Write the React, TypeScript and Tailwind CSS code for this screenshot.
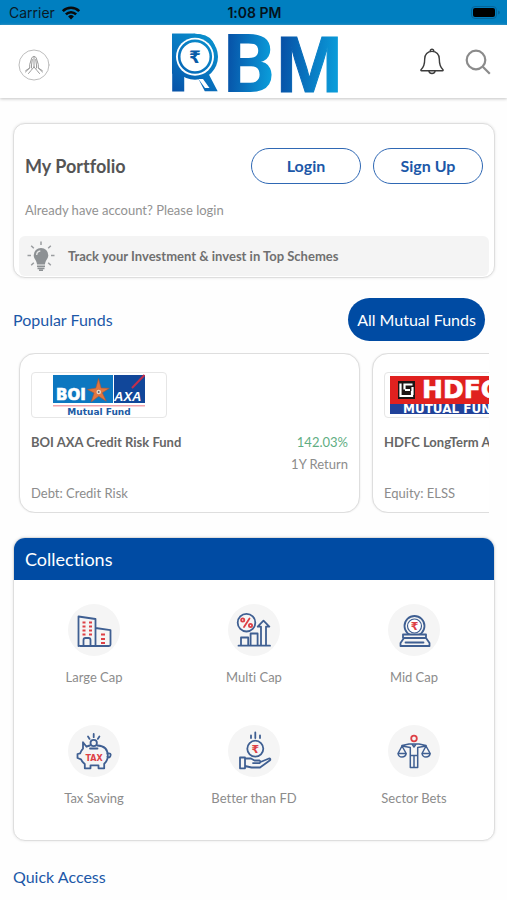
import type { ReactNode } from "react";

const NAVY = "#3f5f92";
const RED = "#dd4046";

function WifiIcon() {
  return (
    <svg viewBox="0 0 20 14" className="h-[14px] w-5" fill="none" stroke="#0a0a0a" strokeWidth="2.6" aria-hidden="true">
      <path d="M1.8 5.2a11.6 11.6 0 0 1 16.4 0" />
      <path d="M4.9 8.4a7.2 7.2 0 0 1 10.2 0" />
      <path d="M10 13.4 7.1 10.5a4.1 4.1 0 0 1 5.8 0Z" fill="#0a0a0a" stroke="none" />
    </svg>
  );
}

function BatteryIcon() {
  return (
    <svg viewBox="0 0 29 13" className="h-[13px] w-[29px]" aria-hidden="true">
      <rect x="0.5" y="0.5" width="25" height="12" rx="3.5" fill="none" stroke="#04659b" />
      <rect x="2" y="2" width="22" height="9" rx="2" fill="#000" />
      <path d="M27 4.5q2 .6 2 2t-2 2Z" fill="#04659b" />
    </svg>
  );
}

function PrayingHands() {
  return (
    <svg viewBox="0 0 32 32" className="size-8" fill="none" stroke="#9a9a9a" strokeLinecap="round" strokeLinejoin="round" aria-hidden="true">
      <circle cx="16" cy="16" r="15" stroke="#bdbdbd" />
      <path d="M16 7.5v10.5M16 7.5c-1.6 0-2.2 1-2.6 2.6l-1.7 5.4v3.500l-4 2.600M16 7.500c1.600 0 2.200 1 2.600 2.600l1.700 5.400v3.500l4 2.600" />
      <path d="M14.300 10.500l-.8 5.500v3M17.700 10.500l.8 5.500v3M16 18l-3 3.500-2.500 3M16 18l3 3.500 2.500 3M11.700 19l-4.200 4M20.300 19l4.200 4" />
    </svg>
  );
}

function BrandLogo() {
  return (
    <svg viewBox="0 0 168 62" className="mt-[2px] h-[62px] w-[168px] overflow-visible" role="img" aria-label="RBM">
      <defs>
        <linearGradient id="gradR" x1="0" y1="60" x2="47" y2="0" gradientUnits="userSpaceOnUse">
          <stop offset="0" stopColor="#0750a6" />
          <stop offset="0.45" stopColor="#0873be" />
          <stop offset="1" stopColor="#0a97d0" />
        </linearGradient>
        <linearGradient id="gradL" x1="0" y1="0" x2="1" y2="0.1">
          <stop offset="0.1" stopColor="#0750a6" />
          <stop offset="0.5" stopColor="#0873be" />
          <stop offset="0.95" stopColor="#0a9bd9" />
        </linearGradient>
      </defs>
      <text x="-4" y="60" fontFamily="Roboto, sans-serif" fontWeight="700" fontSize="82" fill="url(#gradR)">R</text>
      <rect x="1" y="1.700" width="23" height="40" fill="url(#gradR)" />
      <circle cx="24" cy="24.700" r="23" fill="url(#gradR)" />
      <circle cx="24" cy="24.700" r="19" fill="#fff" />
      <circle cx="24" cy="24.700" r="15.800" fill="none" stroke="url(#gradR)" strokeWidth="2.600" />
      <path d="M27.500 47h4.500l6.500 9h-4.500Z" fill="#fff" />
      <text x="24" y="31" textAnchor="middle" fontFamily="'DejaVu Sans', sans-serif" fontWeight="700" fontSize="17" fill="#0a5ba8">₹</text>
      <text x="52" y="60" fontFamily="Roboto, sans-serif" fontWeight="700" fontSize="82" fill="url(#gradL)">B</text>
      <text x="105" y="60" fontFamily="'Liberation Sans', sans-serif" fontWeight="700" fontSize="80" fill="url(#gradL)" stroke="url(#gradL)" strokeWidth="1">M</text>
    </svg>
  );
}

function BellIcon() {
  return (
    <svg viewBox="0 0 26 28" className="h-7 w-[26px]" fill="none" stroke="#3c3c3c" strokeWidth="1.400" strokeLinejoin="round" aria-hidden="true">
      <path d="M11.200 3.600V3a1.800 1.800 0 0 1 3.600 0v.6M13 3.400c-4.500 0-7.300 3.300-7.300 7.600 0 5.800-.8 8-3.500 10.400-.7.700-.4 1.400.4 1.400h20.800c.8 0 1.100-.7.4-1.400-2.700-2.400-3.500-4.600-3.500-10.400 0-4.300-2.800-7.600-7.300-7.600Z" />
      <path d="M9.800 23a3.300 3.300 0 0 0 6.400 0" />
    </svg>
  );
}

function SearchIcon() {
  return (
    <svg viewBox="0 0 26 26" className="size-[26px]" fill="none" stroke="#8b8b8b" strokeWidth="2.200" aria-hidden="true">
      <circle cx="11" cy="11" r="9.300" />
      <path d="m17.800 17.800 7 7" />
    </svg>
  );
}

function BulbIcon() {
  return (
    <svg viewBox="0 0 30 32" className="h-8 w-[30px]" fill="none" stroke="#9a9da0" strokeWidth="1.500" aria-hidden="true">
      <path d="M15 1.500v3.500M1.500 15.500H5M25 15.500h3.500M5.200 5.700l2.600 2.600M24.800 5.700l-2.600 2.600M5.200 25.300l2.600-2.600M24.800 25.300l-2.600-2.600" />
      <path d="M15 8a7.200 7.200 0 0 0-7.300 7.200c0 3.700 3.300 5.300 3.300 9.300h8c0-4 3.300-5.600 3.300-9.300A7.200 7.200 0 0 0 15 8Z" fill="#8d9194" stroke="none" />
      <path d="M10.700 15c0-2.300 1.400-3.700 3.600-4" stroke="#e8e8e8" strokeWidth="1.300" />
      <path d="M11 26.300h8M11.500 28.400h7M13 30.300h4" stroke="#8d9194" strokeWidth="1.600" />
    </svg>
  );
}

function BoiAxaLogo() {
  return (
    <svg viewBox="0 0 92 42" className="h-[42px] w-[92px]" role="img" aria-label="BOI AXA Mutual Fund">
      <rect x="0" y="1" width="60" height="28" fill="#0d77c0" />
      <rect x="61" y="1" width="31" height="28" fill="#11479a" />
      <text x="3" y="26" fontFamily="'DejaVu Sans', sans-serif" fontWeight="700" fontSize="15" fill="#fff" stroke="#fff" strokeWidth="0.700">BOI</text>
      <path d="M45.500 4.500l2.600 9.500 8.200.3-7 4.500 4 8.400-7.600-5-7.600 5.800 3-9-6.600-3.500 8.300-1.400Z" fill="#e27640" stroke="#a95836" strokeWidth="0.600" />
      <circle cx="45.700" cy="18" r="2.300" fill="#e8d8c8" />
      <circle cx="45.700" cy="18" r="0.900" fill="#5a5f70" />
      <path d="M79 14 91.500 1" stroke="#c32f4c" strokeWidth="2" />
      <text x="61" y="27" fontFamily="'Liberation Sans', sans-serif" fontStyle="italic" fontWeight="700" fontSize="13" fill="#fff">AXA</text>
      <rect x="0" y="31" width="92" height="1.500" fill="#f3a5ad" />
      <text x="46" y="41" textAnchor="middle" fontFamily="'DejaVu Sans', sans-serif" fontWeight="700" fontSize="9" fill="#205aa4">Mutual Fund</text>
    </svg>
  );
}

function HdfcLogo() {
  return (
    <svg viewBox="0 0 124 38" className="h-[38px] w-[124px]" role="img" aria-label="HDFC Mutual Fund">
      <rect width="124" height="28" fill="#e0211f" />
      <rect y="28" width="124" height="10" fill="#21429a" />
      <rect x="8" y="5" width="17" height="18" fill="#1c1414" />
      <path d="M10.500 7.500v12.500h5M12.500 20h9.500v-5M22.500 8.500h-8v5M15 14h5M22.500 11v8" fill="none" stroke="#fff" strokeWidth="2.200" />
      <text x="32" y="22" fontFamily="'DejaVu Sans', sans-serif" fontWeight="700" fontSize="25" fill="#fff" stroke="#fff" strokeWidth="0.600">HDFC</text>
      <text x="13" y="37" fontFamily="'DejaVu Sans', sans-serif" fontWeight="700" fontSize="12" fill="#fff">MUTUAL FUND</text>
    </svg>
  );
}

function IconDisc({ children }: { children: ReactNode }) {
  return (
    <svg viewBox="0 0 52 52" className="size-[52px]" fill="none" stroke={NAVY} strokeWidth="1.800" strokeLinecap="round" strokeLinejoin="round" aria-hidden="true">
      <circle cx="26" cy="26" r="26" fill="#f5f5f5" stroke="none" />
      {children}
    </svg>
  );
}

function Rupee({ x, y, size }: { x: number; y: number; size: number }) {
  return (
    <text x={x} y={y} textAnchor="middle" fontFamily="'DejaVu Sans', sans-serif" fontWeight="700" fontSize={size} fill={RED} stroke="none">₹</text>
  );
}

const largeCap = (
  <IconDisc>
    <path d="M10.500 42V12.500l17 2.500v27M27.500 24l15 2.200V40.500q0 1.500-1.500 1.500H12q-1.500 0-1.500-1.500" />
    <path d="M15.500 42v-6q0-2 2-2h3q2 0 2 2v6" />
    <path d="M14.500 18.500h3M21 18.500h3M14.500 22.500h3M21 22.500h3M14.500 26.500h3M21 26.500h3M14.500 30.500h3M21 30.500h3M33 30.500h4M33 35h4M33 39h4" stroke={RED} strokeWidth="1.800" strokeLinecap="butt" />
  </IconDisc>
);

const multiCap = (
  <IconDisc>
    <circle cx="18.500" cy="18.700" r="8.800" />
    <path d="M21.500 14.500l-5.500 8.500" stroke={RED} />
    <circle cx="14.700" cy="16" r="1.600" stroke={RED} />
    <circle cx="22.500" cy="21.500" r="1.600" stroke={RED} />
    <path d="M10.500 41.700H42M13 41.500v-8h7.200v8M22.600 41.500V29.500h7v12M33 41.500V22.700h-3.300l5.800-6 5.800 6H38v18" />
  </IconDisc>
);

const midCap = (
  <IconDisc>
    <circle cx="26.500" cy="22" r="10" />
    <circle cx="26.500" cy="22" r="7" fill="#fff" strokeWidth="1.200" />
    <Rupee x={26.500} y={26} size={11} />
    <path d="M15 30.500h23v3.500H15ZM16 34l-3.500 5v3h29v-3L38 34M17.500 38.500h18" fill="#f5f5f5" />
  </IconDisc>
);

const taxSaving = (
  <IconDisc>
    <path d="M22 20.500c-1.500.2-2.500.6-3.500 1.200l-3.500-4.500v6.500c-1.500 1.500-2.300 3-2.800 4.600L9.500 29v4l3.500 1.300c1 2.200 2.200 3.600 3.800 4.700v4.300h5.700v-3h8v3h5.700v-4.500c2.300-2 3.600-4.800 3.600-8 0-6.500-4-10-10.300-10.300" />
    <path d="M39.500 28.500q4-.8 3 2.200t-3 1M22 23.500h7.500" />
    <circle cx="25.700" cy="18" r="3.200" />
    <path d="M25.700 9v3.200M20 11.500l1.600 2.400M31.400 11.500l-1.600 2.400" />
    <text x="26" y="36" textAnchor="middle" fontFamily="'DejaVu Sans', sans-serif" fontWeight="700" fontSize="8" fill={RED} stroke="none">TAX</text>
  </IconDisc>
);

const betterThanFd = (
  <IconDisc>
    <circle cx="27.300" cy="23.700" r="8" />
    <Rupee x={27.300} y={27.700} size={11} />
    <path d="M27.300 7.500V13M23 10.500V13M32 10.500V13" />
    <path d="M12 32.500h5v10.800h-5ZM17 33.500h6l3.500 2h5q1.800 1.200 0 2.600H25M32.500 37l8.500-3.500q2 .2 1 1.800L32 42.500H23.500L17 41" />
  </IconDisc>
);

const sectorBets = (
  <IconDisc>
    <circle cx="26" cy="13.500" r="2.800" stroke={RED} />
    <path d="M14 20.500l7-1.500h10l7 1.500M22.300 42.500V22.500L14 21M29.700 42.500V22.500L38 21M22.300 42.500h7.400M26 31v11M22.300 30.500h7.400M24 19l2 3 2-3" strokeWidth="1.500" />
    <path d="M14 21l-4 7.500h8.200ZM38 21l-4 7.500h8.200ZM10 28.500q.5 3.500 4 3.500t4.200-3.500M34 28.500q.5 3.500 4 3.500t4.200-3.500" strokeWidth="1.500" />
  </IconDisc>
);

const collections = [
  { label: "Large Cap", icon: largeCap },
  { label: "Multi Cap", icon: multiCap },
  { label: "Mid Cap", icon: midCap },
  { label: "Tax Saving", icon: taxSaving },
  { label: "Better than FD", icon: betterThanFd },
  { label: "Sector Bets", icon: sectorBets },
];

interface FundCardProps {
  logo: ReactNode;
  name: string;
  category: string;
  value: string;
}

function FundCard({ logo, name, category, value }: FundCardProps) {
  return (
    <article className="w-[341px] shrink-0 rounded-2xl border border-[#dedede] bg-white px-[11px] pt-[18px] pb-2 text-[13px] leading-[22px] text-[#8c8c8c] shadow-[0_0_2px_#e4e4e4]">
      <div className="flex h-[46px] w-[136px] items-center justify-center rounded-sm border border-[#e6e6e6]">{logo}</div>
      <div className="mt-[13px] flex justify-between whitespace-nowrap">
        <h3 className="font-bold text-[#666]">{name}</h3>
        <span className="text-[#5fae83]">{value}</span>
      </div>
      <p className="text-right">1Y Return</p>
      <p className="mt-[7px]">{category}</p>
    </article>
  );
}

export default function App() {
  return (
    <div className="min-h-screen bg-[#fefefe] font-['Lato',sans-serif] [font-variant-ligatures:none]">
      <div className="grid h-[25px] grid-cols-3 items-center bg-[#007fc0] pr-[7px] pl-[9px] font-['Inter',sans-serif] text-sm text-[#0a1a26]">
        <span className="flex items-center gap-[6px]">
          Carrier
          <WifiIcon />
        </span>
        <span className="text-center font-semibold text-[#04121c]">1:08 PM</span>
        <span className="flex justify-end">
          <BatteryIcon />
        </span>
      </div>

      <header className="grid h-[73px] grid-cols-[1fr_auto_1fr] items-center bg-white pr-4 pl-[18px] shadow-[0_1px_3px_#c4c4c4]">
        <button type="button" aria-label="Welcome" className="mt-[6px] justify-self-start">
          <PrayingHands />
        </button>
        <BrandLogo />
        <div className="flex items-center gap-5 justify-self-end">
          <button type="button" aria-label="Notifications">
            <BellIcon />
          </button>
          <button type="button" aria-label="Search">
            <SearchIcon />
          </button>
        </div>
      </header>

      <main className="pt-[25px] pr-3 pb-[10px] pl-[13px]">
        <section className="rounded-xl border border-[#dedede] bg-white px-[5px] pt-6 shadow-[0_0_3px_#e4e4e4]">
          <div className="flex items-center justify-between px-[6px]">
            <h1 className="text-lg font-bold text-[#555]">My Portfolio</h1>
            <div className="flex gap-3">
              <button type="button" className="h-9 w-[110px] rounded-full border border-[#2f68b4] text-base font-bold text-[#1c58a8]">
                Login
              </button>
              <button type="button" className="h-9 w-[110px] rounded-full border border-[#2f68b4] text-base font-bold text-[#1c58a8]">
                Sign Up
              </button>
            </div>
          </div>
          <p className="mt-4 px-[6px] text-[13px] leading-5 text-[#929292]">Already have account? Please login</p>
          <div className="mt-4 mb-px flex h-10 items-center gap-3 rounded-md bg-[#f4f4f4] pl-[7px]">
            <BulbIcon />
            <p className="text-[13px] leading-5 font-bold text-[#707070]">Track your Investment &amp; invest in Top Schemes</p>
          </div>
        </section>

        <section className="mt-5">
          <div className="flex items-center justify-between pr-[10px]">
            <h2 className="text-base text-[#1c58a8]">Popular Funds</h2>
            <button type="button" className="h-[43px] w-[137px] rounded-full bg-[#004ba3] text-base text-white">
              All Mutual Funds
            </button>
          </div>
          <div className="mt-3 mr-[6px] flex gap-3 overflow-x-auto pl-[6px] [scrollbar-width:none]">
            <FundCard logo={<BoiAxaLogo />} name="BOI AXA Credit Risk Fund" category="Debt: Credit Risk" value="142.03%" />
            <FundCard logo={<HdfcLogo />} name="HDFC LongTerm Advantage Fund" category="Equity: ELSS" value="68.34%" />
          </div>
        </section>

        <section className="mt-6 overflow-hidden rounded-xl border border-[#dedede] bg-white shadow-[0_0_3px_#e4e4e4]">
          <h2 className="bg-[#004ba3] px-[11px] py-[7px] text-lg text-white">Collections</h2>
          <ul className="grid grid-cols-3 gap-y-[38px] pt-6 pb-8">
            {collections.map((item) => (
              <li key={item.label}>
                <a href="#" className="flex flex-col items-center gap-[11px] text-[13px] leading-5 text-[#8c8c8c]">
                  {item.icon}
                  {item.label}
                </a>
              </li>
            ))}
          </ul>
        </section>

        <h2 className="mt-6 text-base text-[#1c58a8]">Quick Access</h2>
      </main>
    </div>
  );
}
